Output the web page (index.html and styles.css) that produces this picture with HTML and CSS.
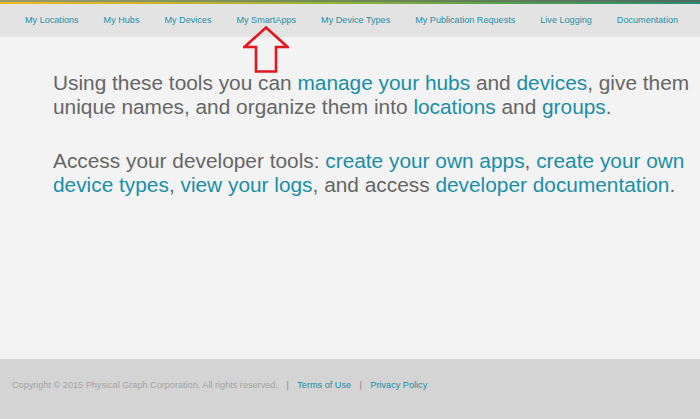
FILE: index.html
```html
<!DOCTYPE html>
<html>
<head>
<meta charset="utf-8">
<link rel="stylesheet" href="styles.css">
</head>
<body>
<div class="page">
  <header class="topbar">
    <div class="stripe-dark"></div><div class="stripe-color"></div>
    <nav class="nav">
      <a href="#">My Locations</a>
      <a href="#">My Hubs</a>
      <a href="#">My Devices</a>
      <a href="#" class="smartapps">My SmartApps
        <svg class="arrow" width="46" height="47" viewBox="0 0 46 47">
          <path d="M23 1.5 L44.5 21 L33 21 L33 45.5 L13 45.5 L13 21 L1.5 21 Z" fill="none" stroke="#e8161b" stroke-width="2.6" stroke-linejoin="miter"/>
        </svg>
      </a>
      <a href="#">My Device Types</a>
      <a href="#">My Publication Requests</a>
      <a href="#">Live Logging</a>
      <a href="#">Documentation</a>
    </nav>
  </header>
  <main class="main">
    <p>Using these tools you can <a href="#">manage your hubs</a> and <a href="#">devices</a>, give them unique names, and organize them into <a href="#">locations</a> and <a href="#">groups</a>.</p>
    <p>Access your developer tools: <a href="#">create your own apps</a>, <a href="#">create your own device types</a>, <a href="#">view your logs</a>, and access <a href="#">developer documentation</a>.</p>
  </main>
  <footer class="footer">
    <span>Copyright © 2015 Physical Graph Corporation. All rights reserved.</span>
    <span class="sep">|</span>
    <a href="#">Terms of Use</a>
    <span class="sep">|</span>
    <a href="#">Privacy Policy</a>
  </footer>
</div>
</body>
</html>
```
FILE: styles.css
```css
html, body {
  margin: 0;
  padding: 0;
  height: 100%;
}
body {
  font-family: "Liberation Sans", Arial, sans-serif;
  background: #f3f3f3;
}
.page {
  display: flex;
  flex-direction: column;
  height: 419px;
  overflow: hidden;
}
.topbar {
  background: #e3e3e3;
  position: relative;
  z-index: 2;
}
.stripe-dark {
  height: 2px;
  background: linear-gradient(to right, #9a9a70 0%, #6f8a52 50%, #4d6a60 100%);
}
.stripe-color {
  height: 2px;
  background: linear-gradient(to right, #f2b81e 0%, #c9b52c 25%, #8fb23a 50%, #4f9a52 75%, #2a8a70 100%);
}
.nav {
  display: flex;
  gap: 25px;
  padding: 0 0 0 25px;
  height: 33px;
  font-size: 9.1px;
  line-height: 32px;
}
.nav a {
  color: #1d8fa7;
  text-decoration: none;
  white-space: nowrap;
  position: relative;
  display: block;
  height: 33px;
}
.arrow {
  position: absolute;
  left: 7px;
  top: 22px;
}
.main {
  flex: 1;
  padding: 34px 0 0 53px;
}
.main p {
  margin: 0 0 30px 0;
  font-size: 20.85px;
  line-height: 24px;
  color: #666666;
}
.main a {
  color: #1a8ea6;
  text-decoration: none;
}
.footer {
  height: 60px;
  box-sizing: border-box;
  background: #d4d4d4;
  display: flex;
  align-items: flex-start;
  padding: 21px 0 0 12px;
  font-size: 9.15px;
  color: #a3a3a3;
  gap: 8.5px;
}
.footer a {
  color: #1a8ea6;
  text-decoration: none;
}
.footer .sep {
  color: #8a8a8a;
}
```
